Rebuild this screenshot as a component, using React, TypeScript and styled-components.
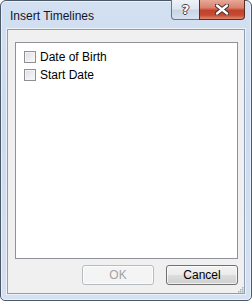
import React from "react";
import styled, { createGlobalStyle } from "styled-components";

const GlobalStyle = createGlobalStyle`
  html, body {
    margin: 0;
    padding: 0;
    background: #ffffff;
  }
  * {
    box-sizing: border-box;
  }
`;

const fields = ["Date of Birth", "Start Date"];

export default function App() {
  return (
    <>
      <GlobalStyle />
      <Window>
        <TitleBar>
          <Title>Insert Timelines</Title>
          <Controls>
            <HelpButton>
              <Glyph>?</Glyph>
            </HelpButton>
            <CloseButton>
              <svg width="14" height="11" viewBox="0 0 14 11">
                <path d="M2 1.5 L12 9.5 M12 1.5 L2 9.5" stroke="#3a2a28" strokeWidth="4.2" strokeLinecap="round" />
                <path d="M2 1.5 L12 9.5 M12 1.5 L2 9.5" stroke="#ffffff" strokeWidth="2.4" strokeLinecap="round" />
              </svg>
            </CloseButton>
          </Controls>
        </TitleBar>
        <Client>
          <ListBox>
            {fields.map((f) => (
              <Item key={f}>
                <CheckBox />
                <Label>{f}</Label>
              </Item>
            ))}
          </ListBox>
          <ButtonRow>
            <Button disabled>OK</Button>
            <Button $primary>Cancel</Button>
          </ButtonRow>
          <Grip>
            <svg width="7" height="7" viewBox="0 0 7 7">
              {[
                [5, 1],
                [3, 3],
                [5, 3],
                [1, 5],
                [3, 5],
                [5, 5],
              ].map(([x, y]) => (
                <rect key={`${x}-${y}`} x={x} y={y} width="1.5" height="1.5" fill="#a9b3bf" />
              ))}
            </svg>
          </Grip>
        </Client>
      </Window>
    </>
  );
}

const Window = styled.div`
  width: 252px;
  height: 301px;
  display: flex;
  flex-direction: column;
  border: 1px solid #4b5868;
  border-radius: 6px 6px 5px 5px;
  background: linear-gradient(180deg, #d3e0f2 0%, #cddbef 40%, #d5e1f2 100%);
  box-shadow: inset 0 0 0 1px rgba(255, 255, 255, 0.55);
  font-family: "Liberation Sans", Arial, sans-serif;
`;

const TitleBar = styled.div`
  height: 28px;
  display: flex;
  align-items: flex-start;
  justify-content: space-between;
  padding: 0 6px 0 9px;
  flex-shrink: 0;
`;

const Title = styled.div`
  margin-top: 8px;
  font-size: 12px;
  line-height: 14px;
  color: #10162c;
`;

const Controls = styled.div`
  display: flex;
  margin-top: -1px;
`;

const CtlButton = styled.div`
  height: 20px;
  display: flex;
  align-items: center;
  justify-content: center;
  border: 1px solid #6b7585;
  border-top: none;
`;

const HelpButton = styled(CtlButton)`
  width: 28px;
  border-right: none;
  border-radius: 0 0 0 4px;
  background: linear-gradient(180deg, #eef2f8 0%, #dfe6ef 45%, #c9d5e4 55%, #d8e2ee 100%);
`;

const CloseButton = styled(CtlButton)`
  width: 46px;
  border-color: #5e2b24;
  border-radius: 0 0 4px 0;
  background: linear-gradient(180deg, #e8a898 0%, #d9826f 40%, #c2412a 55%, #c84a32 80%, #e08a70 100%);
`;

const Glyph = styled.span`
  font-family: "DejaVu Sans", sans-serif;
  font-weight: bold;
  font-size: 13px;
  line-height: 13px;
  color: #ffffff;
  text-shadow: -1px 0 #3b4350, 1px 0 #3b4350, 0 -1px #3b4350, 0 1px #3b4350;
`;

const Client = styled.div`
  position: relative;
  flex: 1;
  margin: 0 6px 6px 6px;
  display: flex;
  flex-direction: column;
  padding: 12px 6px 7px 7px;
  background: #f0f0f0;
  border: 1px solid #8d9db2;
  box-shadow: 0 0 0 1px rgba(255, 255, 255, 0.6);
`;

const ListBox = styled.div`
  height: 217px;
  display: flex;
  flex-direction: column;
  padding: 5px 8px;
  background: #ffffff;
  border: 1px solid #8e9298;
`;

const Item = styled.div`
  height: 18px;
  display: flex;
  align-items: center;
  gap: 4px;
`;

const CheckBox = styled.span`
  width: 12px;
  height: 12px;
  border: 1px solid #8f8f8f;
  background: linear-gradient(135deg, #d8dce2 0%, #eef0f3 60%, #f8f8f8 100%);
  box-shadow: inset 0 0 0 1px #f4f4f4;
`;

const Label = styled.span`
  font-size: 12px;
  line-height: 14px;
  color: #000000;
`;

const ButtonRow = styled.div`
  margin-top: 6px;
  display: flex;
  justify-content: flex-end;
  gap: 12px;
`;

const Button = styled.button<{ $primary?: boolean }>`
  width: 72px;
  height: 20px;
  padding: 0;
  font-family: "Liberation Sans", Arial, sans-serif;
  font-size: 12px;
  border-radius: 3px;
  border: 1px solid ${(p) => (p.$primary ? "#707070" : "#b7bcc2")};
  color: ${(p) => (p.$primary ? "#000000" : "#a3a3a3")};
  background: ${(p) =>
    p.$primary
      ? "linear-gradient(180deg, #f3f3f3 0%, #ebebeb 48%, #dcdcdc 52%, #cfcfcf 100%)"
      : "#f4f4f4"};
  box-shadow: inset 0 0 0 1px rgba(255, 255, 255, 0.7);
`;

const Grip = styled.div`
  position: absolute;
  right: 0;
  bottom: 0;
  width: 7px;
  height: 7px;
  display: flex;
`;
